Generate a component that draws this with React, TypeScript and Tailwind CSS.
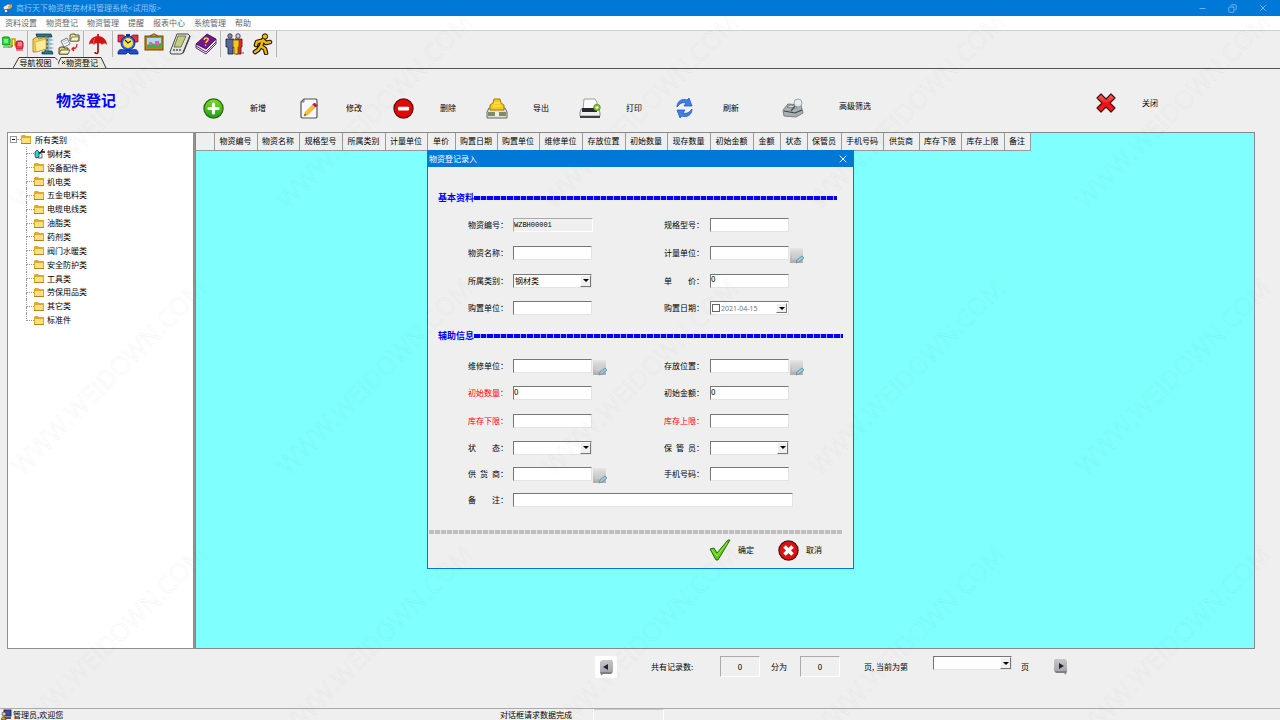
import React, { useState } from 'react'
import { X, Minus, Copy } from 'lucide-react'

const menuItems = ['资料设置', '物资登记', '物资管理', '提醒', '报表中心', '系统管理', '帮助']

const categories = [
  '钢材类', '设备配件类', '机电类', '五金电料类', '电缆电线类', '油脂类', '药剂类',
  '阀门水暖类', '安全防护类', '工具类', '劳保用品类', '其它类', '标准件',
]

const columns = [
  { name: '物资编号', width: 'w-[43px]' },
  { name: '物资名称', width: 'w-[42px]' },
  { name: '规格型号', width: 'w-[43px]' },
  { name: '所属类别', width: 'w-[43px]' },
  { name: '计量单位', width: 'w-[42px]' },
  { name: '单价', width: 'w-[28px]' },
  { name: '购置日期', width: 'w-[42px]' },
  { name: '购置单位', width: 'w-[42px]' },
  { name: '维修单位', width: 'w-[43px]' },
  { name: '存放位置', width: 'w-[43px]' },
  { name: '初始数量', width: 'w-[42px]' },
  { name: '现存数量', width: 'w-[43px]' },
  { name: '初始金额', width: 'w-[43px]' },
  { name: '金额', width: 'w-[27px]' },
  { name: '状态', width: 'w-[27px]' },
  { name: '保管员', width: 'w-[34px]' },
  { name: '手机号码', width: 'w-[42px]' },
  { name: '供货商', width: 'w-[36px]' },
  { name: '库存下限', width: 'w-[42px]' },
  { name: '库存上限', width: 'w-[43px]' },
  { name: '备注', width: 'w-[26px]' },
]

/* ---------- Icons ---------- */

const AppIcon = () => (
  <svg className="size-[11px]" viewBox="0 0 11 11">
    <path d="M1 4l5-3 4 1-3 4-5 1z" fill="#dfe9f5" stroke="#456" strokeWidth=".6" />
    <path d="M6 3l4-2v3L7 7z" fill="#f0a030" />
    <path d="M2 7l4-1 3 1-3 3-4-1z" fill="#2e5fa8" />
    <circle cx="4" cy="8" r="1.3" fill="#e8eef8" />
  </svg>
)

const LinkIcon = () => (
  <svg className="size-[22px]" viewBox="0 0 22 22">
    <path d="M7 12h3V6h3v6h3" fill="none" stroke="#c8a000" strokeWidth="1.6" />
    <path d="M6 14h4v-2" fill="none" stroke="#806000" />
    <rect x="0" y="4" width="8" height="8" rx="2" fill="#22dd33" stroke="#0a8a1a" />
    <path d="M2 7h4M2 9h4" stroke="#c8ffc8" />
    <path d="M1 14h6" stroke="#4ad058" strokeWidth="1.5" />
    <rect x="14" y="8" width="7" height="8" rx="2" fill="#f04050" stroke="#b01020" />
    <path d="M16 10h4M16 12h4" stroke="#ffc0c0" />
    <path d="M14 17h7" stroke="#e06070" strokeWidth="1.5" />
  </svg>
)

const ZipIcon = () => (
  <svg className="size-[22px]" viewBox="0 0 22 22">
    <path d="M4 1h15l1 3h-4v14h4l1 3H10v-2h3V4H5z" fill="#2b7790" stroke="#0c3b4c" strokeWidth=".8" />
    <path d="M14 5l6 2-6 2 6 2-6 2 6 2-6 2" fill="none" stroke="#8cb8c6" strokeWidth="1.4" />
    <path d="M1 6l4-2 2 2 7-2v12L4 19H1z" fill="#f5cf52" stroke="#a57a10" strokeWidth=".8" />
    <path d="M3 9l11-3v10L4 19z" fill="#ffeb9a" stroke="#c0962a" strokeWidth=".6" />
  </svg>
)

const FilesIcon = () => (
  <svg className="size-[22px]" viewBox="0 0 22 22">
    <path d="M12 2l2-1h3v1h4v6h-9z" fill="#efe28a" stroke="#444" strokeWidth=".9" />
    <path d="M12 8l2-4h7l-1 4z" fill="#fff6b0" stroke="#555" strokeWidth=".7" />
    <path d="M3 8l6-3 3 6-6 3z" fill="#fff" stroke="#555" strokeWidth=".8" />
    <path d="M5 9l4-2M6 11l4-2" stroke="#888" strokeWidth=".7" />
    <path d="M1 15l2-1h3v1h4v6H1z" fill="#e2d46c" stroke="#333" strokeWidth=".9" />
    <path d="M1 21l2-4h9l-2 4z" fill="#fff6b0" stroke="#333" strokeWidth=".7" />
    <path d="M19 11c0 3-2 5-5 5m2-2l-2 2 2 2" fill="none" stroke="#e02020" strokeWidth="1.3" />
  </svg>
)

const UmbrellaIcon = () => (
  <svg className="size-[22px]" viewBox="0 0 22 22">
    <path d="M11 1v3M11 10v9c0 2-3 2-3 0" fill="none" stroke="#a00808" strokeWidth="1.6" />
    <path d="M2 12c0-5 4-9 9-9s9 4 9 9c-1-2-4-2-5 0-1-2-3-2-4-1-1-1-3-1-4 1-1-2-4-2-5 0z" fill="#d01515" />
    <path d="M8 5c-1 2-2 4-1 6" fill="none" stroke="#f08080" strokeWidth=".8" />
  </svg>
)

const ClockIcon = () => (
  <svg className="size-[22px]" viewBox="0 0 22 22">
    <path d="M1 2h5l3 2-4 5H1zM21 2h-5l-3 2 4 5h4z" fill="#e83040" stroke="#701018" strokeWidth=".7" />
    <path d="M9 2h4" stroke="#123a9a" strokeWidth="2" />
    <path d="M1 20c0-4 4-4 6-3h8c2-1 6-1 6 3v1h-8l-2-2-2 2H1z" fill="#1750d8" stroke="#0a1c66" strokeWidth=".8" />
    <circle cx="11" cy="10" r="7" fill="#2a64e8" stroke="#0a1c66" strokeWidth=".8" />
    <circle cx="11" cy="10" r="5" fill="#ffe640" />
    <path d="M8 7l3 3 3-2" fill="none" stroke="#222" strokeWidth="1.1" />
  </svg>
)

const PictureIcon = () => (
  <svg className="size-[22px]" viewBox="0 0 22 22">
    <path d="M7 3l4-2 4 2" fill="none" stroke="#8a5a10" strokeWidth="1.2" />
    <rect x="2" y="3" width="18" height="14" fill="#b58420" stroke="#6e4a08" />
    <rect x="4" y="5" width="14" height="10" fill="#a8dcf0" />
    <path d="M4 12l4-2 4 1 6-1v5H4z" fill="#3fae52" />
    <path d="M6 9h3v3H6zM12 8h4v4h-4z" fill="#e060b0" />
  </svg>
)

const PdaIcon = () => (
  <svg className="size-[22px]" viewBox="0 0 22 22">
    <path d="M8 1h11l2 2-7 17-2 1H2l-1-2z" fill="#e4e6e8" stroke="#333" strokeWidth=".9" />
    <path d="M9 3h8l-5 11H5z" fill="#c4cc84" stroke="#5a6420" strokeWidth=".8" />
    <path d="M21 3l-7 17" stroke="#444" strokeWidth="1.4" />
    <path d="M4 17h2M7 17h2M10 17h2" stroke="#555" strokeWidth="1.3" />
  </svg>
)

const BookIcon = () => (
  <svg className="size-[22px]" viewBox="0 0 22 22">
    <path d="M1 11L12 1l9 5-10 10z" fill="#7a1590" stroke="#2c063f" strokeWidth=".8" />
    <path d="M1 11v4l10 6 10-10V6L11 16z" fill="#f0e8f4" stroke="#2c063f" strokeWidth=".8" />
    <path d="M1 13l10 6L21 9" fill="none" stroke="#7a1590" strokeWidth="1" />
    <path d="M9 7c1-3 5-2 4 0-.6 1.400-2 1.300-2 3M10.500 11.500v1.300" fill="none" stroke="#ffdf30" strokeWidth="1.500" />
  </svg>
)

const PeopleIcon = () => (
  <svg className="size-[22px]" viewBox="0 0 22 22">
    <circle cx="6" cy="3" r="2.200" fill="#8890a8" stroke="#223" strokeWidth=".8" />
    <circle cx="14" cy="3" r="2.200" fill="#cfd4e4" stroke="#223" strokeWidth=".8" />
    <path d="M2 6h8v8H9v7H4v-7H2z" fill="#59659a" stroke="#15193c" strokeWidth=".8" />
    <path d="M11 6h7v8h-1v7h-5V6z" fill="#e02828" stroke="#511" strokeWidth=".8" />
    <path d="M9 7h6v7h-1v7h-4v-7H9z" fill="#f5c820" stroke="#6a5208" strokeWidth=".8" />
    <path d="M17 20h3" stroke="#888" strokeWidth="1.500" />
  </svg>
)

const RunnerIcon = () => (
  <svg className="size-[22px]" viewBox="0 0 22 22">
    <path
      d="M11 7L9 13M9 8L5 9 4 12M11 7l3 3 4-1M9 13l4 3 1 4M9 13l-3 4-3 2"
      fill="none" stroke="#1a1200" strokeWidth="4.600" strokeLinecap="round" strokeLinejoin="round"
    />
    <circle cx="13" cy="3.500" r="2.700" fill="#f0b800" stroke="#1a1200" />
    <path
      d="M11 7L9 13M9 8L5 9 4 12M11 7l3 3 4-1M9 13l4 3 1 4M9 13l-3 4-3 2"
      fill="none" stroke="#f0b800" strokeWidth="2.400" strokeLinecap="round" strokeLinejoin="round"
    />
  </svg>
)

const AddIcon = () => (
  <svg className="size-[21px]" viewBox="0 0 21 21">
    <defs>
      <linearGradient id="add" x1="0" y1="0" x2="0" y2="1">
        <stop offset="0" stopColor="#7de01a" />
        <stop offset="1" stopColor="#1f9c1c" />
      </linearGradient>
    </defs>
    <circle cx="10.500" cy="10.500" r="9.600" fill="url(#add)" stroke="#26631a" strokeWidth="1.200" />
    <path d="M10.500 6v9M6 10.500h9" stroke="#fff" strokeWidth="3.200" strokeLinecap="round" />
  </svg>
)

const EditIcon = () => (
  <svg className="size-[21px]" viewBox="0 0 21 21">
    <path d="M5 1h12l1 1v17l-1 1H3l-1-1V4z" fill="#f7f8fb" stroke="#555" strokeWidth="1.200" />
    <path d="M2 4h3V1" fill="none" stroke="#777" />
    <path d="M5 18l1.500-4L14 6.500l2.500 2.500L9 16.500z" fill="#fbc02a" stroke="#e0a030" strokeWidth=".7" />
    <path d="M5 18l1-2.500 1.500 1.500z" fill="#555" />
    <path d="M14 6.500l1.500-1.500L18 7.500 16.500 9z" fill="#c2127a" stroke="#7a0a4c" strokeWidth=".8" />
  </svg>
)

const DeleteIcon = () => (
  <svg className="size-[21px]" viewBox="0 0 21 21">
    <circle cx="10.500" cy="10.500" r="9.600" fill="#e00808" stroke="#5a1010" strokeWidth="1.200" />
    <rect x="5" y="8.800" width="11" height="3.600" rx=".8" fill="#fff" />
  </svg>
)

const ExportIcon = () => (
  <svg className="h-[21px] w-[22px]" viewBox="0 0 22 21">
    <path d="M3 10h16l2 4v6H1v-6z" fill="#e0e0d4" stroke="#666" />
    <path d="M2 14h18v4H2z" fill="#7c8c68" />
    <path d="M9 14h4v4H9z" fill="#eef0e0" />
    <path d="M8 1h6l1 4 3 2v5H4V7l3-2z" fill="#f6cb18" stroke="#96700a" strokeWidth=".9" />
    <path d="M8 5h6M7 8h8" stroke="#fff08a" strokeWidth=".9" />
  </svg>
)

const PrintIcon = () => (
  <svg className="h-[21px] w-[22px]" viewBox="0 0 22 21">
    <path d="M5 1h11l2 3v8H4z" fill="#fbfbfb" stroke="#888" strokeWidth=".8" />
    <path d="M2 11h18l1 4v3H1v-3z" fill="#f0f0f0" stroke="#777" strokeWidth=".8" />
    <path d="M3 10h15v4H3z" fill="#26292e" />
    <path d="M1 18h20v2H1z" fill="#3c3f44" />
    <circle cx="18" cy="9.500" r="3.300" fill="#86c232" stroke="#4c8a14" strokeWidth=".7" />
    <path d="M16.500 9.500h3M18 8v3" stroke="#fff" strokeWidth="1.100" />
  </svg>
)

const RefreshIcon = () => (
  <svg className="h-[22px] w-[17px]" viewBox="0 0 17 22">
    <path d="M1 10c0-6 5-9 10-7l2-2 3 8-8 0 2-3c-3-1-6 0-9 4z" fill="#3f7fe8" stroke="#1c4fae" strokeWidth=".7" />
    <path d="M16 12c0 6-5 9-10 7l-2 2-3-8 8 0-2 3c3 1 6 0 9-4z" fill="#3f7fe8" stroke="#1c4fae" strokeWidth=".7" />
  </svg>
)

const FilterIcon = () => (
  <svg className="h-[21px] w-[22px]" viewBox="0 0 22 21">
    <path d="M1 12l5-6 13 1 2 8-7 4-12-1z" fill="#a9b0b4" stroke="#70777c" strokeWidth=".9" />
    <path d="M2 13l11 2 7-3" fill="none" stroke="#3d4347" strokeWidth="1.200" />
    <path d="M5 9l9 1 3-2-9-1z" fill="#dfe5e8" stroke="#555" strokeWidth=".6" />
    <circle cx="16" cy="5" r="4" fill="#e6eef2" fillOpacity=".9" stroke="#9aa4aa" />
    <path d="M13 8l-4 5" stroke="#555" strokeWidth="1.500" />
  </svg>
)

const RedCrossIcon = () => (
  <svg className="size-5" viewBox="0 0 20 20">
    <defs>
      <linearGradient id="cross" x1="0" y1="0" x2="0" y2="1">
        <stop offset="0" stopColor="#f07070" />
        <stop offset=".55" stopColor="#f01010" />
        <stop offset="1" stopColor="#ff2020" />
      </linearGradient>
    </defs>
    <path
      d="M5 1l5 5 5-5 4 4-5 5 5 5-4 4-5-5-5 5-4-4 5-5-5-5z"
      fill="url(#cross)" stroke="#4a1010" strokeWidth="1.200" strokeLinejoin="round"
    />
  </svg>
)

const CheckIcon = () => (
  <svg className="size-[22px]" viewBox="0 0 22 22">
    <path d="M1 10l4-1 3 5L19 1h2L9 21H7z" fill="#5ccc14" stroke="#2b6c10" strokeLinejoin="round" />
    <path d="M3 11l5 6L18 4" fill="none" stroke="#a5ec5a" strokeWidth=".9" />
  </svg>
)

const CancelIcon = () => (
  <svg className="size-[21px]" viewBox="0 0 21 21">
    <circle cx="10.500" cy="10.500" r="9.600" fill="#e01010" stroke="#4c1010" strokeWidth="1.200" />
    <path d="M6.500 6.500l8 8M14.500 6.500l-8 8" stroke="#fff" strokeWidth="3.600" />
  </svg>
)

const LookupIcon = () => (
  <svg className="h-[17px] w-[14px]" viewBox="0 0 14 17">
    <defs>
      <linearGradient id="page" x1="0" y1="0" x2="0" y2="1">
        <stop offset="0" stopColor="#e6e6e6" />
        <stop offset="1" stopColor="#acacac" />
      </linearGradient>
    </defs>
    <rect width="13" height="15" y="1" fill="url(#page)" />
    <path d="M2 5h9M2 7h9M2 9h9M2 11h6" stroke="#d4d4d4" />
    <path d="M6 16l1-3 5-4 2 2-5 4z" fill="#9ccbe4" stroke="#4c7f9c" strokeWidth=".7" />
    <path d="M6 16l1-2 1 1.500z" fill="#c8963c" />
  </svg>
)

const FolderIcon = () => (
  <svg className="h-[9px] w-[10px]" viewBox="0 0 10 9">
    <path d="M0 1l1-1h3l1 1h5v8H0z" fill="#dfa92c" />
    <path d="M1 3h8v5H1z" fill="#fbdf83" />
    <path d="M0 8.500h10" stroke="#b5821c" />
  </svg>
)

const SelectedIcon = () => (
  <svg className="h-[11px] w-[11px]" viewBox="0 0 11 11">
    <path d="M5 5l3 1v4H4z" fill="#fff" stroke="#444" strokeWidth=".8" />
    <path d="M1 4l2-2 2 2v5l-3 1-1-2z" fill="#20d8e0" stroke="#222" strokeWidth=".7" />
    <path d="M5 5l2-1 2-3M7 4h4" fill="none" stroke="#111" strokeWidth="1.300" />
  </svg>
)

const PagerIcon = ({ next }: { next?: boolean }) => (
  <svg className="h-[17px] w-[15px]" viewBox="0 0 15 17">
    <defs>
      <linearGradient id="pager" x1="0" y1="0" x2="0" y2="1">
        <stop offset="0" stopColor="#c8c8ca" />
        <stop offset="1" stopColor="#9c9ca2" />
      </linearGradient>
    </defs>
    <g transform={next ? 'translate(15 0) scale(-1 1)' : undefined}>
      <path d="M3 1h10l1 2v10l-2 2H4l-2 2v-2L1 13V3z" fill="url(#pager)" />
      <path d="M1 13h12l-1 2H4l-2 1z" fill="#808086" />
      <path d="M9 5v6L4 8z" fill="#223" />
    </g>
  </svg>
)

const UserIcon = () => (
  <svg className="size-[11px]" viewBox="0 0 11 11">
    <rect x="3" y="1" width="7" height="6" fill="#3848c8" stroke="#222" strokeWidth=".9" />
    <path d="M4 8h6v2H4z" fill="#555" />
    <circle cx="3" cy="5" r="2" fill="#f0c890" stroke="#222" strokeWidth=".6" />
    <path d="M0 11c0-4 5-4 5 0z" fill="#d8a020" stroke="#222" strokeWidth=".6" />
  </svg>
)

/* ---------- Form controls ---------- */

const inset = 'border border-t-[#777] border-l-[#777] border-r-[#e3e3e3] border-b-[#e3e3e3]'

const Arrow = () => (
  <span className="pointer-events-none absolute top-px right-px bottom-px flex w-[11px] items-center justify-center border border-t-white border-l-white border-r-[#777] border-b-[#777] bg-[#efefef]">
    <span className="border-x-[3px] border-t-[3px] border-x-transparent border-t-black" />
  </span>
)

interface SelectBoxProps {
  id?: string
  label?: string
  options?: string[]
}

const SelectBox: React.FC<SelectBoxProps> = ({ id, label, options = [''] }) => (
  <div className="relative h-[14px] w-[79px]">
    <select id={id} aria-label={label} className={`block h-full w-full appearance-none bg-white pl-px leading-none ${inset}`}>
      {options.map((option) => (
        <option key={option}>{option}</option>
      ))}
    </select>
    <Arrow />
  </div>
)

interface FieldProps {
  id: string
  label: string
  value?: string
  kind?: 'text' | 'readonly' | 'select' | 'date'
  options?: string[]
  required?: boolean
  lookup?: boolean
  wide?: boolean
}

const Field: React.FC<FieldProps> = ({ id, label, value = '', kind = 'text', options, required, lookup, wide }) => (
  <>
    <label htmlFor={id} className={`whitespace-pre ${required ? 'text-[#ff0000]' : ''}`}>
      {label}：
    </label>
    <div className={`flex items-center ${wide ? 'col-span-3' : ''}`}>
      {kind === 'select' && <SelectBox id={id} options={options} />}
      {kind === 'date' && (
        <div className={`relative flex h-[14px] w-[79px] items-center bg-white pl-px ${inset}`}>
          <input type="checkbox" aria-label="启用日期" className="size-2 shrink-0 appearance-none border border-[#666] bg-white" />
          <input id={id} defaultValue={value} className="w-[50px] pl-px font-['Noto_Sans',sans-serif] text-[7px] leading-none text-[#777]" />
          <Arrow />
        </div>
      )}
      {kind === 'readonly' && (
        <input
          id={id}
          readOnly
          defaultValue={value}
          className="h-[14px] w-20 border border-t-[#aaa] border-r-white border-b-white border-l-[#aaa] bg-[#efefef] font-['Liberation_Mono',monospace] text-[7px] leading-none"
        />
      )}
      {kind === 'text' && (
        <input id={id} defaultValue={value} className={`h-[14px] bg-white pb-1 leading-none ${inset} ${wide ? 'w-[280px]' : 'w-[79px]'}`} />
      )}
      {lookup && (
        <button type="button" aria-label="选择" className="mt-1 ml-px">
          <LookupIcon />
        </button>
      )}
    </div>
  </>
)

const SectionTitle: React.FC<{ title: string; className: string }> = ({ title, className }) => (
  <div className={`flex items-center pl-[10px] ${className}`}>
    <h2 className="w-9 shrink-0 text-[9px] leading-3 font-bold whitespace-nowrap text-[#0000ff]">{title}</h2>
    <div className="h-1 flex-1 bg-[repeating-linear-gradient(to_right,#0000ff_0_6px,#a0a0f0_6px_7px,#0000ff_7px_12px,#a0a0f0_12px_13px,#0000ff_13px_19px,#a0a0f0_19px_20px)]" />
  </div>
)

const EntryDialog: React.FC<{ onClose: () => void }> = ({ onClose }) => (
  <form
    role="dialog"
    aria-label="物资登记录入"
    onSubmit={(e) => e.preventDefault()}
    className="absolute top-[17px] left-[231px] h-[419px] w-[427px] border border-[#0078d7] bg-[#efefef]"
  >
    <div className="flex h-4 items-center justify-between bg-[#0078d7] pr-1 pl-px text-white">
      <span>物资登记录入</span>
      <button type="button" aria-label="关闭窗口" onClick={onClose}>
        <X className="size-3" strokeWidth={2} />
      </button>
    </div>

    <SectionTitle title="基本资料" className="mt-[25px] pr-4" />
    <div className="mt-[7px] grid grid-cols-[45px_151px_46px_1fr] grid-rows-[28px_28px_27px_28px] items-center pl-10">
      <Field id="code" label="物资编号" kind="readonly" value="WZBH00001" />
      <Field id="model" label="规格型号" />
      <Field id="name" label="物资名称" />
      <Field id="unit" label="计量单位" lookup />
      <Field id="category" label="所属类别" kind="select" options={categories} />
      <Field id="price" label="单　　价" value="0" />
      <Field id="buyer" label="购置单位" />
      <Field id="date" label="购置日期" kind="date" value="2021-04-15" />
    </div>

    <SectionTitle title="辅助信息" className="mt-2 pr-[10px]" />
    <div className="mt-[10px] grid grid-cols-[45px_151px_46px_1fr] grid-rows-[27px_28px_27px_27px_25px_27px] items-center pl-10">
      <Field id="repair" label="维修单位" lookup />
      <Field id="place" label="存放位置" lookup />
      <Field id="initCount" label="初始数量" value="0" required />
      <Field id="initAmount" label="初始金额" value="0" />
      <Field id="min" label="库存下限" required />
      <Field id="max" label="库存上限" required />
      <Field id="state" label="状　　态" kind="select" />
      <Field id="keeper" label={'保\u2002管\u2002员'} kind="select" />
      <Field id="supplier" label={'供\u2002货\u2002商'} lookup />
      <Field id="phone" label="手机号码" />
      <Field id="remark" label="备　　注" wide />
    </div>

    <div className="mt-[17px] mr-[11px] ml-px h-1 bg-[repeating-linear-gradient(to_right,#bfbfbf_0_5px,#e6e6e6_5px_6px)]" />
    <div className="mt-[5px] flex items-center justify-end gap-6 pr-[31px]">
      <button type="submit" className="flex items-center gap-[7px]">
        <CheckIcon />
        确定
      </button>
      <button type="button" onClick={onClose} className="flex items-center gap-[7px]">
        <CancelIcon />
        取消
      </button>
    </div>
  </form>
)

/* ---------- Page parts ---------- */

const Divider = () => <span className="mx-[3px] h-[26px] w-px bg-[#b5b5b5]" />

const Toolbar = () => (
  <div className="flex h-[27px] items-center border-t border-[#d0d0d0] pl-[2px]">
    <button aria-label="导航"><LinkIcon /></button>
    <Divider />
    <div className="flex gap-1 pl-px">
      <button aria-label="备份"><ZipIcon /></button>
      <button aria-label="恢复"><FilesIcon /></button>
    </div>
    <Divider />
    <button aria-label="保护"><UmbrellaIcon /></button>
    <Divider />
    <div className="flex gap-1 pl-px">
      <button aria-label="提醒"><ClockIcon /></button>
      <button aria-label="图片"><PictureIcon /></button>
      <button aria-label="手机"><PdaIcon /></button>
      <button aria-label="帮助"><BookIcon /></button>
    </div>
    <Divider />
    <div className="flex gap-[6px]">
      <button aria-label="用户"><PeopleIcon /></button>
      <button aria-label="退出"><RunnerIcon /></button>
    </div>
    <span className="ml-[2px] h-[26px] w-px bg-[#b5b5b5]" />
  </div>
)

const Tabs = () => (
  <div className="flex h-3 items-end border-b border-[#555] pl-[13px]">
    <button className="relative h-[11px] w-[45px] leading-[11px]">
      <svg className="absolute inset-0 h-full w-full" viewBox="0 0 45 11" preserveAspectRatio="none">
        <path d="M0 11L6 .500h36l3 3" fill="#efefef" stroke="#333" />
      </svg>
      <span className="relative">导航视图</span>
    </button>
    <button className="relative flex h-[11px] w-[49px] items-center pl-[3px] leading-[11px]">
      <svg className="absolute inset-0 h-full w-full" viewBox="0 0 49 11" preserveAspectRatio="none">
        <path d="M-2 11L3 .500h40l5 10.500" fill="#ece9d8" stroke="#333" />
      </svg>
      <X className="relative size-[5px]" strokeWidth={4} />
      <span className="relative">物资登记</span>
    </button>
  </div>
)

const actions = [
  { name: '新增', icon: <AddIcon /> },
  { name: '修改', icon: <EditIcon /> },
  { name: '删除', icon: <DeleteIcon /> },
  { name: '导出', icon: <ExportIcon /> },
  { name: '打印', icon: <PrintIcon /> },
  { name: '刷新', icon: <RefreshIcon /> },
  { name: '高级筛选', icon: <FilterIcon /> },
]

const CategoryTree = () => (
  <aside className="w-[188px] shrink-0 border border-r-2 border-[#909090] bg-white">
    <div className="flex h-[194px] flex-col">
      <div className="flex flex-1 items-center pl-[2px]">
        <button aria-label="折叠" className="flex size-[7px] items-center justify-center border border-[#999]">
          <span className="h-px w-[3px] bg-black" />
        </button>
        <span className="w-1 border-t border-dotted border-[#aaa]" />
        <FolderIcon />
        <span className="ml-1">所有类别</span>
      </div>
      {categories.map((category, i) => (
        <div key={category} className="flex flex-1 items-center pl-[18px]">
          <span className="flex w-2 flex-col self-stretch">
            <span className="flex-1 border-b border-l border-dotted border-[#999]" />
            <span className={`flex-1 border-dotted border-[#999] ${i < categories.length - 1 ? 'border-l' : ''}`} />
          </span>
          {i === 0 ? <SelectedIcon /> : <FolderIcon />}
          <span className={i === 0 ? 'ml-[2px]' : 'ml-[3px]'}>{category}</span>
        </div>
      ))}
    </div>
  </aside>
)

const Pager = () => (
  <div className="flex h-[59px] items-start pt-[7px] pl-[595px]">
    <button aria-label="上一页" className="flex size-[22px] items-center justify-center bg-white">
      <PagerIcon />
    </button>
    <div className="ml-[34px] flex h-[21px] items-center">
      <span className="w-[69px]">共有记录数:</span>
      <output className="h-[21px] w-10 border border-t-[#aaa] border-r-white border-b-white border-l-[#aaa] text-center leading-[19px]">0</output>
      <span className="w-10 pl-[11px]">分为</span>
      <output className="h-[21px] w-10 border border-t-[#aaa] border-r-white border-b-white border-l-[#aaa] text-center leading-[19px]">0</output>
      <span className="w-[93px] pl-6">页, 当前为第</span>
      <div className="self-start">
        <SelectBox label="当前页" />
      </div>
      <span className="ml-[9px]">页</span>
      <button aria-label="下一页" className="ml-6">
        <PagerIcon next />
      </button>
    </div>
  </div>
)

const Watermark = () => (
  <div aria-hidden="true" className="pointer-events-none absolute inset-0 overflow-hidden">
    <div className="-mt-[23px] -ml-[25px] grid auto-rows-[266px] grid-cols-[repeat(5,266px)]">
      {Array.from({ length: 15 }, (_, i) => (
        <span
          key={i}
          className="flex -rotate-45 items-center justify-center font-['Open_Sans',sans-serif] text-[25px] text-transparent [-webkit-text-stroke:1px_rgba(90,90,90,0.06)]"
        >
          WWW.WEIDOWN.COM
        </span>
      ))}
    </div>
  </div>
)

const App: React.FC = () => {
  const [isDialogOpen, setIsDialogOpen] = useState(true)

  return (
    <div className="relative flex min-h-screen flex-col bg-[#efefef] font-['Noto_Sans_CJK_SC',sans-serif] text-[8px] leading-3 text-black">
      {/* Title bar */}
      <header className="flex h-4 items-center bg-[#0078d7] pl-[2px] text-[#8fc4f0]">
        <AppIcon />
        <span className="ml-[3px]">商行天下物资库房材料管理系统&lt;试用版&gt;</span>
        <div className="ml-auto flex gap-[21px] pr-3">
          <button aria-label="最小化"><Minus className="size-[9px]" strokeWidth={2} /></button>
          <button aria-label="还原"><Copy className="size-[9px] -scale-x-100" strokeWidth={2} /></button>
          <button aria-label="关闭程序"><X className="size-[10px]" strokeWidth={2} /></button>
        </div>
      </header>

      {/* Menu */}
      <nav className="flex h-[14px] items-center gap-[9px] bg-white pl-[5px] text-[#666]">
        {menuItems.map((item) => (
          <button key={item}>{item}</button>
        ))}
      </nav>

      <Toolbar />
      <Tabs />

      {/* Page heading and actions */}
      <div className="flex h-[63px] items-start">
        <h1 className="w-[203px] shrink-0 pt-[21px] pl-14 text-[15px] leading-5 font-bold text-[#0000ff]">物资登记</h1>
        <div className="grid grid-cols-[96px_94px_93px_93px_97px_106px_auto] pt-7">
          {actions.map(({ name, icon }) => (
            <button key={name} onClick={() => setIsDialogOpen(true)} className="flex items-center">
              <span className="w-[47px]">{icon}</span>
              <span className={name === '高级筛选' ? 'pb-1 pl-[10px]' : ''}>{name}</span>
            </button>
          ))}
        </div>
        <button className="mr-[122px] ml-auto flex items-center gap-[26px] pt-6">
          <RedCrossIcon />
          关闭
        </button>
      </div>

      {/* Tree and records */}
      <main className="flex flex-1 pr-[25px] pl-[7px]">
        <CategoryTree />
        <section className="relative flex-1 border border-[#888] bg-[#80ffff]">
          <table className="w-[834px] table-fixed border-collapse">
            <thead>
              <tr className="h-[17px] bg-[#efefef]">
                <th aria-label="行号" className="w-[18px] border-r border-b border-[#999]" />
                {columns.map(({ name, width }) => (
                  <th key={name} className={`border-r border-b border-[#999] p-0 font-normal whitespace-nowrap ${width}`}>
                    {name}
                  </th>
                ))}
              </tr>
            </thead>
          </table>
          {isDialogOpen && <EntryDialog onClose={() => setIsDialogOpen(false)} />}
        </section>
      </main>

      <Pager />

      {/* Status bar */}
      <footer className="flex h-3 items-center border-t border-[#aaa] pl-px">
        <div className="flex w-[499px] items-center gap-px">
          <UserIcon />
          管理员,欢迎您
        </div>
        <div className="h-full w-[94px] border-r border-white leading-3">对话框请求数据完成</div>
        <div className="h-full w-[70px] border-t border-r border-t-[#ccc] border-r-white" />
      </footer>

      <Watermark />
    </div>
  )
}

export default App
